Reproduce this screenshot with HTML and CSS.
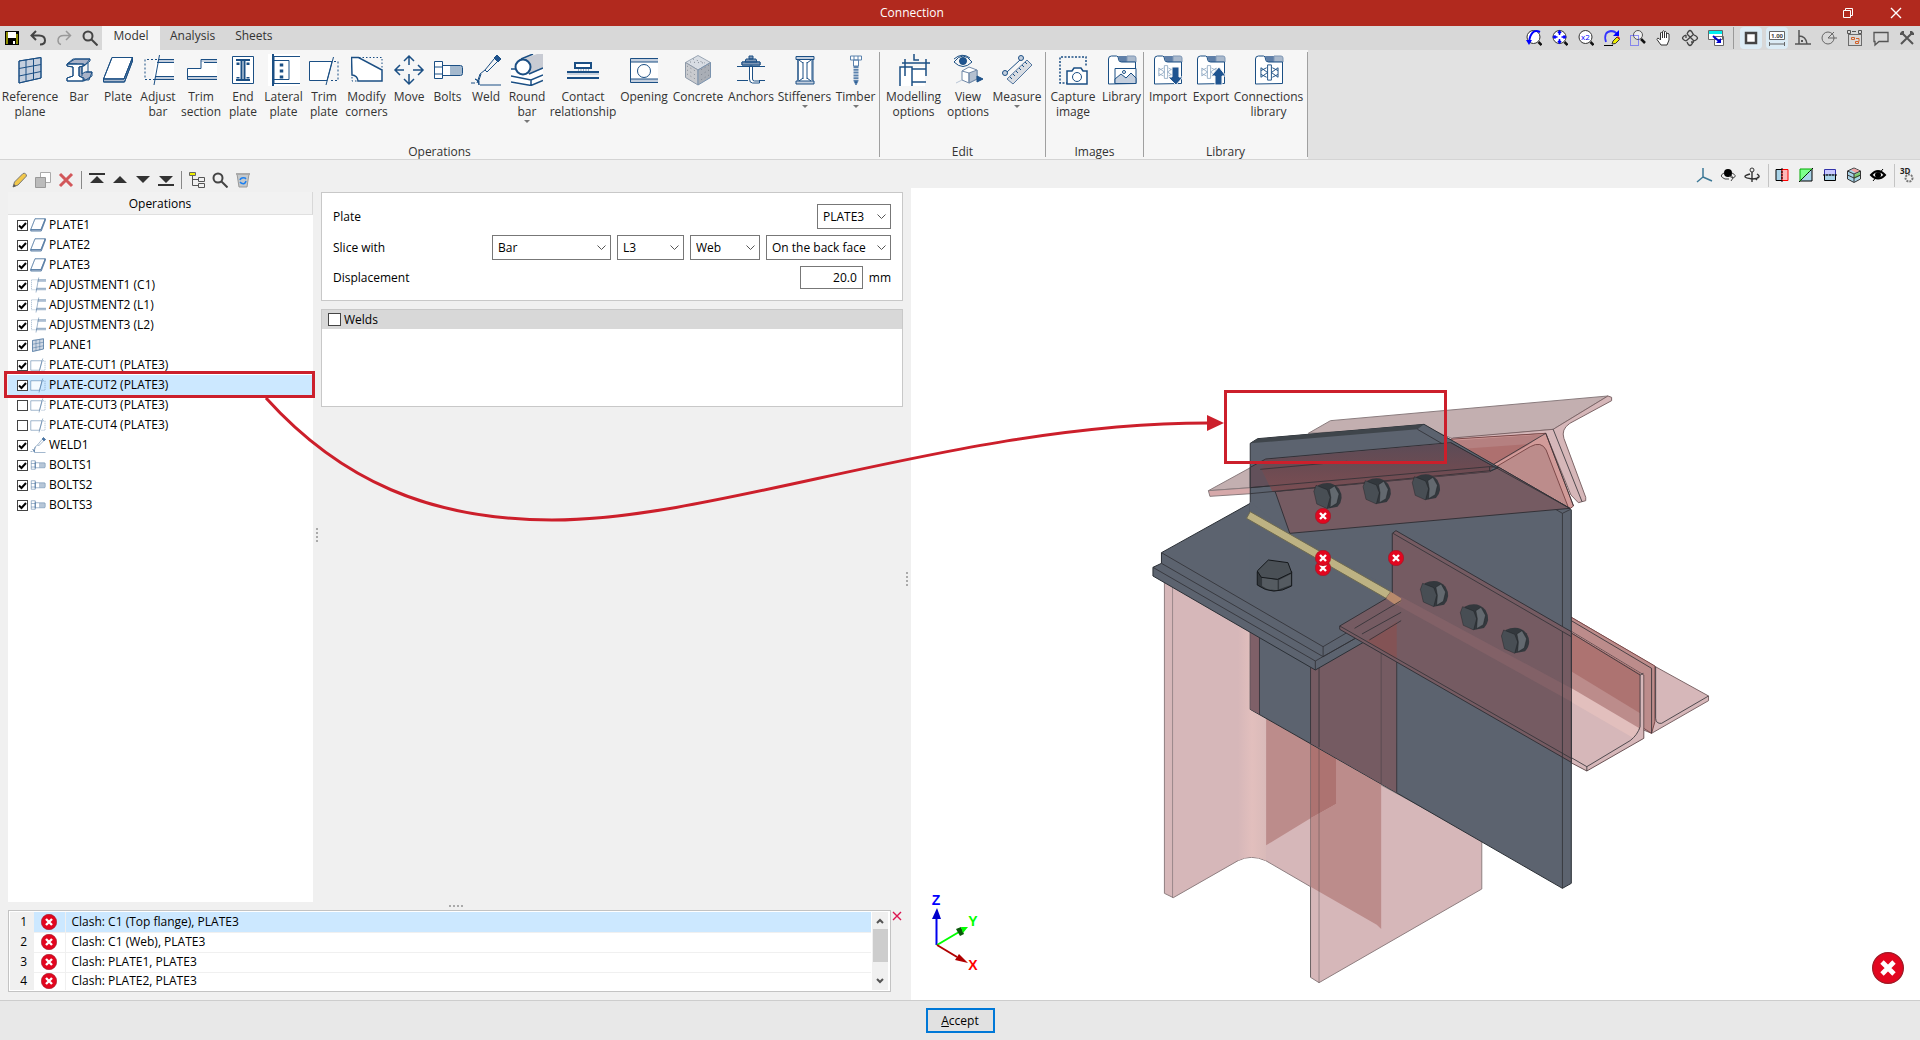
FILE: index.html
```html
<!DOCTYPE html>
<html lang="en">
<head>
<meta charset="utf-8">
<meta name="viewport" content="width=device-width, initial-scale=1">
<title>Connection</title>
<link rel="stylesheet" href="styles.css">
</head>
<body>
<svg class="defs" aria-hidden="true">
  <symbol id="i-ref" viewBox="0 0 32 32"><path class="tint" d="M5 7 27 3.500V24L5 29z"/><path d="M5 7 27 3.500V24L5 29zM5 14.500 27 10.500M5 22 27 17.500M12 6v21.500M19.500 5v21"/></symbol>
  <symbol id="i-bar" viewBox="0 0 32 32"><path fill="#aab3c8" d="m4 10 8-5h15l-4 5-4 2v8l3-2h7l-3 8H4l6-3 4-1v-12z"/><path fill="#fff" d="M4 10h16v2l-4 1v9l4 2v3H4v-3l6-2v-9l-6-1z"/><path d="M4 10h17v2l-5 1v9l5 2v3H4v-3l6-2v-9l-6-1zM4 10l6-5h17v2l-6 5M19 13v9M25 9v9M23 18h6v4l-8 5"/></symbol>
  <symbol id="i-plate" viewBox="0 0 32 32"><path class="paper" d="M10 3.500h20.500L22 25H1.500z"/><path fill="#aebccf" d="M1.500 25H22l8.500-21.500V7L22.500 28h-21z"/><path d="M10 3.500h20.500V7L22.500 28h-21v-3zM1.500 25H22l8.500-21"/></symbol>
  <symbol id="i-adjust" viewBox="0 0 32 32"><path class="paper" stroke="none" d="M14 5h18v20H11z"/><path class="tint" stroke="none" d="M16 5h16v3H15zM13 22h19v3H12z"/><path d="M16 5.500h16M15 8.500h17M13 22.500h19M12 25.500h20M17.500 1 12 31"/><path stroke-dasharray="2 2" d="M15 5.500H3v20h10"/></symbol>
  <symbol id="i-section" viewBox="0 0 32 32"><path class="paper" stroke="none" d="M2 14h14V5h16v20H2z"/><path class="tint" stroke="none" d="M16 5h16v3H16zM2 22h30v3H2z"/><path d="M32 5.500H16v9H2.500v11H32M19 8.500h13M3 22.500h29"/></symbol>
  <symbol id="i-end" viewBox="0 0 32 32"><path class="paper" d="M5.500 2.500h21v27h-21z"/><path stroke-width="2" d="M9 6h14M9 26h14M14.500 6v20M17.500 6v20"/><path stroke-width="3" stroke-dasharray="2.500 12" d="M11 8.500v16M21 8.500v16"/></symbol>
  <symbol id="i-lateral" viewBox="0 0 32 32"><path class="paper" stroke="none" d="M0 0h32v32H0z"/><path d="M5.500 0v32h-1V0M32 2.500H6v4M32 29.500H6v-4"/><path class="paper" d="M6 6.500h15v19H6z"/><path stroke-width="3.500" stroke-dasharray="3 3" d="M13.500 9.500v15"/></symbol>
  <symbol id="i-trim" viewBox="0 0 32 32"><path class="paper" d="M1.500 7.500H24L19 26.500H1.500z"/><path d="M25.500 3 18 31"/><path stroke-dasharray="2 2" d="M26 7.500h4v19h-9"/></symbol>
  <symbol id="i-modify" viewBox="0 0 32 32"><path class="paper" stroke-width="1.500" d="M.500 3.500h7L31 16v11H7a6 6 0 0 0-6-6z"/><path stroke-dasharray="1.500 2" d="M8 3.500h23V16M1 23v4h6"/></symbol>
  <symbol id="i-move" viewBox="0 0 32 32"><path stroke-width="1.500" d="M16 11V2m-5 5 5-5 5 5M16 20v10m-5-5 5 5 5-5M11 16H2m5-5-5 5 5 5M20 16h10m-5-5 5 5-5 5"/></symbol>
  <symbol id="i-bolt" viewBox="0 0 32 32"><path class="paper" d="M2.500 7.500h8v17h-8zM10.500 11.500h18q2 0 2 2v6q0 2-2 2h-18z"/><path d="M2.500 13h8M2.500 20h8M10.500 9v14"/><path stroke-width=".8" d="M19 12v9M21 12v9M23 12v9M25 12v9M27 12v9M29 12v9"/></symbol>
  <symbol id="i-weld" viewBox="0 0 32 32"><path d="M10 31H31M1 29h4M27 1l4 4-3 3-4-4zM24 5l-9 11 2 2L27 8M15 16l-5 4-3 9M11 20l-3 9"/><path class="solid" d="M27 1l4 4-3 3-4-4zM9 31q0-5-4-6l4 2z"/></symbol>
  <symbol id="i-round" viewBox="0 0 32 32"><path class="paper" stroke="none" d="M0 15 20 5h12v19l-12 8L0 30z"/><path fill="#c8cbd3" stroke="none" d="M14 4 26 0h6v15L17 20z"/><path stroke-width="1.500" d="M0 15h8M18 20l14-6M0 22l20 4 12-5M0 28l20 3.500 12-5M20 26v5M10 5 22 0"/><circle class="paper" stroke-width="2" cx="12" cy="13" r="7.500"/></symbol>
  <symbol id="i-contact" viewBox="0 0 32 32"><path class="paper" stroke-width="2" d="M8 9h16v5H8z"/><path stroke-width="2" d="M0 18h32M0 24h32"/><path stroke-width=".8" stroke-dasharray="1 1.500" d="M11 16h12"/><path stroke="#9fb3ca" d="M0 20h32"/></symbol>
  <symbol id="i-opening" viewBox="0 0 32 32"><path class="paper" d="M2.500 4.500H30v24H2.500z" stroke="none"/><path class="tint" stroke="none" d="M2.500 5H30v3H2.500zM2.500 25H30v3H2.500z"/><path d="M30 4.500H2.500v24H30M2.500 8H30M2.500 25H30"/><circle cx="16" cy="17" r="6.500"/></symbol>
  <symbol id="i-concrete" viewBox="0 0 32 32"><path fill="#d8dde4" stroke="#9aa6b4" d="m16 1.500 12.500 7L16 16 3.500 8.500z"/><path fill="#c9cbcf" stroke="#8d99a8" d="M3.500 8.500 16 16v15L3.500 23.500z"/><path fill="#a9aeb6" stroke="#7b93ae" d="M28.500 8.500 16 16v15l12.500-7.500z"/><path stroke="#6d7681" stroke-width=".8" stroke-dasharray="1 3" d="M5 12l10 6M5 16l10 6M5 20l10 6M27 11l-10 6M27 16l-10 6M27 21l-10 6M8 8l14 1M11 5l12 4"/></symbol>
  <symbol id="i-anchors" viewBox="0 0 32 32"><path class="paper" d="M14.500 12h3v13q0 2 2 2h5v2h-7q-3 0-3-4z"/><path d="M2 12.500h28M2 26.500h11M24 26.500h6M7 8h18v3H7z"/><path fill="#7f97b5" d="M7 8h18v3H7zM11 5h10l1 3H10zM14 2h4v3h-4z"/></symbol>
  <symbol id="i-stiff" viewBox="0 0 32 32"><path class="paper" d="M9 5h15v23H9z"/><path class="tint" d="M7 2.500h18v3H7zM7 27h18v3H7z"/><path d="M9 6v20M23 6v20M14 8v17M18 8v17M10 6l4 3M22 6l-4 3M10 27l4-3M22 27l-4-3"/></symbol>
  <symbol id="i-timber" viewBox="0 0 32 32"><g stroke="#5b82ad"><path class="paper" d="M10.500 2h11v4h-11zM13.500 6h5v6h-5zM14 2v4M18 2v4"/><path stroke-width="5" stroke-dasharray="2 .8" d="M16 12v15"/><path class="solid" d="M14 27h4l-2 4z"/></g></symbol>
  <symbol id="i-modelling" viewBox="0 0 32 32"><path class="paper" stroke="none" d="M2 13h25v19H2z"/><path stroke-width="1.500" d="M4 9h28M2 32V13h12v19M7 5v17M28 5v17M16 0v6h5M14 15h14M14 28h14"/></symbol>
  <symbol id="i-view" viewBox="0 0 32 32"><path d="M2 8q9-12 18 0-9 9-18 0z"/><circle class="solid" cx="11" cy="7" r="3.500"/><path d="M2 5q8-7 16-1"/><path class="paper" stroke="#7189a8" d="m10 17 7-4 8 3v9l-8 4-7-3z"/><path fill="#b4c0d0" stroke="#7189a8" d="m17 19 8-3v9l-8 4z"/><path stroke="#7189a8" d="m10 17 7 2v10"/><path class="solid" d="m25 22 6 3-6 3z"/><path stroke="#b9c6d6" d="m4 29 6-3"/></symbol>
  <symbol id="i-measure" viewBox="0 0 32 32"><path d="M6 18 19 6"/><circle class="tint" cx="4" cy="19" r="2.500"/><circle class="tint" cx="20" cy="4" r="2.500"/><path fill="#d9dde3" stroke="#54779f" d="M6 25 26 6l5 5-19 19z"/><path d="m9 23 2 2m1-5 2 2m1-5 2 2m1-5 2 2m1-5 2 2m1-5 2 2"/></symbol>
  <symbol id="i-capture" viewBox="0 0 32 32"><path stroke-width="1.500" stroke-dasharray="2 1.500" d="M11 29H3V3h26v9"/><path class="paper" stroke-width="1.500" d="M10 17h5l2-3h7l2 3h4v13H10z"/><circle cx="20" cy="23" r="4.500"/></symbol>
  <symbol id="i-folder" viewBox="0 0 32 32"><path fill="#5f7fa8" stroke="none" d="M12 2h9v6h-7z"/><path fill="#aab9cc" stroke="#7f97b5" d="M21 2h7q2 0 2 2v4h-9z"/><path class="paper" d="M2.500 30V5q0-3 3-3h5q2 0 2 3 0 3 3 3h14v21.500z"/></symbol>
  <symbol id="i-truss" viewBox="0 0 20 20"><path d="M8 2v16M12 2v16M8 2h4M8 18h4M1 5v10M19 5v10M1 5l7 5-7 5M19 5l-7 5 7 5M1 8l6-3M1 12l6 3M19 8l-6-3M19 12l-6 3"/></symbol>
  <symbol id="s-search" viewBox="0 0 16 16"><g stroke="#444" stroke-width="2"><circle cx="6" cy="6" r="4.500"/><path d="m9.500 9.500 6 6"/></g></symbol>
  <symbol id="s-lens" viewBox="0 0 16 16"><circle cx="7.500" cy="7" r="6.500" fill="#fff" stroke="#333"/><path stroke="#111" stroke-width="2.500" d="m12.500 12 3 3"/></symbol>
  <symbol id="s-err" viewBox="0 0 16 16"><circle cx="8" cy="8" r="7.700" fill="#e2061f" stroke="#9c1a26" stroke-width=".6"/><path stroke="#fff" stroke-width="2.400" d="m5 5 6 6m0-6-6 6"/></symbol>
</svg>

<header class="titlebar">
  <span></span>
  <h1>Connection</h1>
  <div class="window-buttons">
    <button aria-label="Restore"><svg viewBox="0 0 10 10" width="10" height="10"><path stroke="#fff" d="M.5 2.500h7v7h-7zM2.500 2.500v-2h7v7h-2"/></svg></button>
    <button aria-label="Close"><svg viewBox="0 0 10 10" width="10" height="10"><path stroke="#fff" stroke-width="1.400" d="m0 0 10 10M10 0 0 10"/></svg></button>
  </div>
</header>

<nav class="tabbar">
  <div class="quick">
    <button aria-label="Save"><svg viewBox="0 0 16 16"><path fill="#000" d="M1 1h14v14H1z"/><path fill="#8a8a00" d="M2 2h2v12H2zM12 4h2v10h-2z"/><path fill="#fff" d="M4 2h8v6H4zM9 11h2v3H9z"/></svg></button>
    <button aria-label="Undo"><svg viewBox="0 0 16 16"><path stroke="#444" stroke-width="2" d="M6 1 1.500 5.500 6 10M2 5.500h7q6 0 6 5 0 4-5 4"/></svg></button>
    <button aria-label="Redo"><svg viewBox="0 0 16 16"><path stroke="#999" stroke-width="1.500" d="m10 1 4.500 4.500L10 10M14 5.500H8q-6 0-6 5 0 3 3 4"/></svg></button>
    <button aria-label="Search"><svg><use href="#s-search"/></svg></button>
  </div>
  <div class="tabs" role="tablist">
    <button role="tab" aria-selected="true">Model</button>
    <button role="tab" aria-selected="false">Analysis</button>
    <button role="tab" aria-selected="false">Sheets</button>
  </div>
  <div class="view-tools">
    <button aria-label="Previous view"><svg><use href="#s-lens"/><path stroke="#00f" stroke-width="2" d="M14 2Q5-2 3 12"/><path fill="#00f" d="M0 10h6l-3 5z"/></svg></button>
    <button aria-label="Zoom all"><svg><use href="#s-lens"/><path stroke="#00f" stroke-width="1.500" d="M7.500 1v4M7.500 9v4M1.500 7h4M9.500 7h4M6 3l1.500-2L9 3M6 11l1.500 2L9 11M3.500 5.500 1.500 7l2 1.500M11.500 5.500l2 1.500-2 1.500"/></svg></button>
    <button aria-label="Zoom x2"><svg><use href="#s-lens"/><text x="3" y="10" font-size="8" fill="#00f">x2</text></svg></button>
    <button aria-label="Redraw"><svg viewBox="0 0 16 16"><path stroke="#33f" stroke-width="1.800" d="M2 12Q-1 2 7 1q4 0 6 3"/><path fill="#00f" d="M15 0v6H9z"/><path stroke="#000" d="M0 15.500h9"/><path fill="#ee0" stroke="#333" d="m8 14 1-3 4-4 2.500 2.500-4 4z"/><path fill="#d22" d="m13 7 2.500 2.500L16 8l-2-2z"/></svg></button>
    <button aria-label="Zoom window"><svg viewBox="0 0 16 16"><circle cx="8" cy="5" r="4.500" fill="#eee" stroke="#555"/><path stroke="#111" stroke-width="2.500" d="m11 9 4 4"/><path stroke="#33f" stroke-dasharray="1 1" d="M.500 5.500h8v10h-8z"/></svg></button>
    <button aria-label="Pan"><svg viewBox="0 0 16 16"><path fill="#fff" stroke="#333" d="M5 15 1 9.500q0-2 2-1l1.500 1.500V3q1-2 2 0V1.500q1-1.500 2 0V2q1-1.500 2 .5V4q1.500-1.500 2.500 0v6L11 15zM6.500 3v5M8.500 2v6M10.500 3v5"/></svg></button>
    <button aria-label="Orbit"><svg viewBox="0 0 16 16"><g stroke="#444" stroke-width="1.300"><path d="M5 4q3-7 6 0M5 12q3 7 6 0M4 5q-7 3 0 6M12 5q7 3 0 6M4 11l8-7M5 4l7 7M4 8V5M9 12h3"/></g></svg></button>
    <button aria-label="Windows"><svg viewBox="0 0 16 16"><path fill="#fff" stroke="#666" d="M.500.500h14v9H.500zM6.500 6.500h9v9h-9z"/><path fill="#0ee" d="M1 1h13v3H1z"/><path stroke="#00c" stroke-width="2" d="m5 6 7 6"/><path fill="#00c" d="M13 8v5H8z"/></svg></button>
    <i class="sep"></i>
    <button class="on" aria-label="Snap"><svg viewBox="0 0 16 16"><path fill="#fff" stroke="#444" stroke-width="2.500" d="M3 3h10v10H3z"/></svg></button>
    <button class="on" aria-label="Dimensions"><svg viewBox="0 0 16 16"><path fill="#fff" stroke="#666" d="M.500 1.500h15v8H.500zM.500 12v4M15.500 12v4M1 14h14"/><text x="2" y="8" font-size="6" font-weight="700" fill="#444">1.00</text></svg></button>
    <button aria-label="Angle"><svg viewBox="0 0 16 16"><path stroke="#555" stroke-width="1.500" d="M4 0v14M0 14h16M4 6q7 0 8 8"/><path fill="#555" d="M6 10h2v2H6z"/></svg></button>
    <button aria-label="Polar"><svg viewBox="0 0 16 16"><circle cx="7" cy="8" r="6" stroke="#666"/><path stroke="#666" d="M7 8h9M7 8l6-6"/></svg></button>
    <button aria-label="Layers"><svg viewBox="0 0 16 16"><path stroke="#000" stroke-dasharray="1 1" d="M1.500 4.500h13v11h-13z"/><path stroke="#555" d="M.500.500h3v3h-3zM11.500.500h3v3h-3zM5 1.500h4"/><path stroke="#d2622a" d="M4.500 7.500h3v2h-3zM9 8.500h3v3M8.500 11.500h3v2h-3z"/></svg></button>
    <button aria-label="Comment"><svg viewBox="0 0 16 16"><path stroke="#555" stroke-width="1.300" d="M1 2.500h14v9H6L2 15v-3.500H1z"/></svg></button>
    <button aria-label="Tools"><svg viewBox="0 0 16 16"><path stroke="#555" stroke-width="2" d="m2 2 12 12M14 2 2 14M1 4l3 0V1M12 1v3h3"/></svg></button>
  </div>
</nav>

<section class="ribbon" aria-label="Ribbon">
  <div class="group operations">
    <div class="items">
      <button><svg><use href="#i-ref"/></svg>Reference<br>plane</button>
      <button><svg><use href="#i-bar"/></svg>Bar</button>
      <button><svg><use href="#i-plate"/></svg>Plate</button>
      <button><svg><use href="#i-adjust"/></svg>Adjust<br>bar</button>
      <button><svg><use href="#i-section"/></svg>Trim<br>section</button>
      <button><svg><use href="#i-end"/></svg>End<br>plate</button>
      <button><svg><use href="#i-lateral"/></svg>Lateral<br>plate</button>
      <button><svg><use href="#i-trim"/></svg>Trim<br>plate</button>
      <button><svg><use href="#i-modify"/></svg>Modify<br>corners</button>
      <button><svg><use href="#i-move"/></svg>Move</button>
      <button><svg><use href="#i-bolt"/></svg>Bolts</button>
      <button><svg><use href="#i-weld"/></svg>Weld</button>
      <button class="more"><svg><use href="#i-round"/></svg>Round<br>bar</button>
      <button><svg><use href="#i-contact"/></svg>Contact<br>relationship</button>
      <button><svg><use href="#i-opening"/></svg>Opening</button>
      <button><svg><use href="#i-concrete"/></svg>Concrete</button>
      <button><svg><use href="#i-anchors"/></svg>Anchors</button>
      <button class="more"><svg><use href="#i-stiff"/></svg>Stiffeners</button>
      <button class="more"><svg><use href="#i-timber"/></svg>Timber</button>
    </div>
    <h2>Operations</h2>
  </div>
  <div class="group edit">
    <div class="items">
      <button><svg><use href="#i-modelling"/></svg>Modelling<br>options</button>
      <button><svg><use href="#i-view"/></svg>View<br>options</button>
      <button class="more"><svg><use href="#i-measure"/></svg>Measure</button>
    </div>
    <h2>Edit</h2>
  </div>
  <div class="group images">
    <div class="items">
      <button><svg><use href="#i-capture"/></svg>Capture<br>image</button>
      <button><svg viewBox="0 0 32 32"><use href="#i-folder"/><path class="paper" d="M9 14.500h21v15H9z"/><path class="tint" d="m9 25 6-5 5 4 5-5 5 5v5.500H9z"/><circle cx="18" cy="18" r="1.500"/></svg>Library</button>
    </div>
    <h2>Images</h2>
  </div>
  <div class="group library">
    <div class="items">
      <button><svg viewBox="0 0 32 32"><use href="#i-folder"/><use href="#i-truss" x="6" y="9" width="16" height="18" opacity=".5"/><path class="solid" stroke="#f6f6f6" d="M20 13h7v10h4l-7 8-8-8h4z"/></svg>Import</button>
      <button><svg viewBox="0 0 32 32"><use href="#i-folder"/><use href="#i-truss" x="6" y="9" width="16" height="18" opacity=".5"/><path class="solid" stroke="#f6f6f6" d="M20 31h7V22h4l-7-9-8 9h4z"/></svg>Export</button>
      <button><svg viewBox="0 0 32 32"><use href="#i-folder"/><use href="#i-truss" x="6" y="9" width="21" height="19"/></svg>Connections<br>library</button>
    </div>
    <h2>Library</h2>
  </div>
</section>

<main class="workspace">
  <div class="left">
    <div class="list-tools">
      <button aria-label="Edit"><svg viewBox="0 0 16 16"><path fill="#f2c84b" stroke="#777" d="m1 15 1.500-5L11 1.500q3-1 3.500 2.500L6 13z"/><path fill="#555" d="m1 15 1-3 2 2z"/></svg></button>
      <button aria-label="Copy"><svg viewBox="0 0 16 16"><path fill="#fff" stroke="#aaa" d="M5.500.500h10v10h-10z"/><path fill="#bbb" stroke="#999" d="M.500 5.500h10v10H.500z"/></svg></button>
      <button aria-label="Delete"><svg viewBox="0 0 16 16"><path stroke="#d2575a" stroke-width="3" d="m2 2 12 12M14 2 2 14"/></svg></button>
      <i class="sep"></i>
      <button aria-label="Move to top"><svg viewBox="0 0 16 16"><path fill="#333" d="M0 1h16v2H0zM8 4l7 7H1z"/></svg></button>
      <button aria-label="Move up"><svg viewBox="0 0 16 16"><path fill="#333" d="m8 4 7 7H1z"/></svg></button>
      <button aria-label="Move down"><svg viewBox="0 0 16 16"><path fill="#333" d="m8 11 7-7H1z"/></svg></button>
      <button aria-label="Move to bottom"><svg viewBox="0 0 16 16"><path fill="#333" d="M0 12h16v2H0zM8 11l7-7H1z"/></svg></button>
      <i class="sep"></i>
      <button aria-label="Tree"><svg viewBox="0 0 16 16"><path fill="#ee0" stroke="#666" d="M.500.500h6v3h-6z"/><path stroke="#555" d="M3.500 4v9.500h6M4 7.500h6M9.500 5.500h6v4h-6zM9.500 11.500h6v4h-6z"/></svg></button>
      <button aria-label="Find"><svg><use href="#s-search"/></svg></button>
      <button aria-label="Purge"><svg viewBox="0 0 16 16"><path fill="#c4c8cb" stroke="#999" d="M2 2h12l-2 13H4z"/><path fill="#aaa" d="M1 1h14v2H1z"/><path stroke="#1b7ff0" stroke-width="1.500" d="M5 8q1-3 5-2l1 1M11 9q-1 4-5 2L5 10"/></svg></button>
    </div>

    <div class="editor">
      <section class="tree" aria-labelledby="ops">
        <h2 id="ops">Operations</h2>
        <ul>
          <li><label><input type="checkbox" checked><svg><use href="#i-plate"/></svg>PLATE1</label></li>
          <li><label><input type="checkbox" checked><svg><use href="#i-plate"/></svg>PLATE2</label></li>
          <li><label><input type="checkbox" checked><svg><use href="#i-plate"/></svg>PLATE3</label></li>
          <li><label><input type="checkbox" checked><svg><use href="#i-adjust"/></svg>ADJUSTMENT1 (C1)</label></li>
          <li><label><input type="checkbox" checked><svg><use href="#i-adjust"/></svg>ADJUSTMENT2 (L1)</label></li>
          <li><label><input type="checkbox" checked><svg><use href="#i-adjust"/></svg>ADJUSTMENT3 (L2)</label></li>
          <li><label><input type="checkbox" checked><svg><use href="#i-ref"/></svg>PLANE1</label></li>
          <li><label><input type="checkbox" checked><svg><use href="#i-trim"/></svg>PLATE-CUT1 (PLATE3)</label></li>
          <li class="selected"><label><input type="checkbox" checked><svg><use href="#i-trim"/></svg>PLATE-CUT2 (PLATE3)</label></li>
          <li><label><input type="checkbox"><svg><use href="#i-trim"/></svg>PLATE-CUT3 (PLATE3)</label></li>
          <li><label><input type="checkbox"><svg><use href="#i-trim"/></svg>PLATE-CUT4 (PLATE3)</label></li>
          <li><label><input type="checkbox" checked><svg><use href="#i-weld"/></svg>WELD1</label></li>
          <li><label><input type="checkbox" checked><svg><use href="#i-bolt"/></svg>BOLTS1</label></li>
          <li><label><input type="checkbox" checked><svg><use href="#i-bolt"/></svg>BOLTS2</label></li>
          <li><label><input type="checkbox" checked><svg><use href="#i-bolt"/></svg>BOLTS3</label></li>
        </ul>
      </section>
      <div class="grip column"></div>
      <div class="forms">
        <form class="card">
          <div class="row"><label for="plate">Plate</label><select id="plate" class="w74"><option>PLATE3</option></select></div>
          <div class="row"><label for="slice">Slice with</label>
            <select id="slice" class="w119"><option>Bar</option></select>
            <select class="w67" aria-label="Bar name"><option>L3</option></select>
            <select class="w70" aria-label="Part"><option>Web</option></select>
            <select class="w125" aria-label="Face"><option>On the back face</option></select></div>
          <div class="row"><label for="disp">Displacement</label><input id="disp" type="text" value="20.0"><span>mm</span></div>
        </form>
        <section class="welds">
          <label><input type="checkbox">Welds</label>
        </section>
      </div>
      <div class="grip column last"></div>
    </div>
    <div class="grip across"></div>
    <div class="clashes">
      <div class="clash-box">
        <table>
          <tr class="selected"><th scope="row">1</th><td><svg><use href="#s-err"/></svg></td><td>Clash: C1 (Top flange), PLATE3</td></tr>
          <tr><th scope="row">2</th><td><svg><use href="#s-err"/></svg></td><td>Clash: C1 (Web), PLATE3</td></tr>
          <tr><th scope="row">3</th><td><svg><use href="#s-err"/></svg></td><td>Clash: PLATE1, PLATE3</td></tr>
          <tr><th scope="row">4</th><td><svg><use href="#s-err"/></svg></td><td>Clash: PLATE2, PLATE3</td></tr>
        </table>
        <div class="scroll">
          <svg viewBox="0 0 8 6"><path stroke="#555" stroke-width="2" d="m1 5 3-3 3 3"/></svg>
          <i></i>
          <svg viewBox="0 0 8 6"><path stroke="#555" stroke-width="2" d="m1 1 3 3 3-3"/></svg>
        </div>
      </div>
      <button class="dismiss" aria-label="Close messages"><svg viewBox="0 0 8 8"><path stroke="#dc1450" stroke-width="1.400" d="m0 0 8 8M8 0 0 8"/></svg></button>
    </div>
  </div>

  <div class="right">
    <div class="scene-tools">
      <button aria-label="Axes"><svg viewBox="0 0 16 16"><path stroke="#3c7896" stroke-width="1.500" d="M7 1v9l-6 5M7 10l9 4"/></svg></button>
      <button aria-label="Orbit view"><svg viewBox="0 0 16 16"><circle cx="8" cy="6" r="4" fill="#000"/><path stroke="#444" d="M4 6q-6 3 1 6l4 0M12 6q6 3 1 5l-4-2M11 8l2 3-2 3"/></svg></button>
      <button aria-label="Turn view"><svg viewBox="0 0 16 16"><path stroke="#333" stroke-width="1.400" d="M8 5v10M6 7q-11 3 2 5 11-1 5-5M12 13l2-3"/><circle cx="8" cy="3" r="2" stroke="#333"/></svg></button>
      <i class="sep"></i>
      <button aria-label="Section X"><svg viewBox="0 0 16 16"><path fill="#a9d3e8" stroke="#000" d="M2 2.500h6v11H2z"/><path fill="#ffb9b9" stroke="#f00" d="M8 2.500h6v11H8z"/><path stroke="#000" stroke-dasharray="2 1" d="M8 1v14"/></svg></button>
      <button aria-label="Section Y"><svg viewBox="0 0 16 16"><path fill="#a9d3e8" stroke="#000" d="M14 2v12H2z"/><path fill="#7dff8d" stroke="#0a0" d="M2 14V2h12z"/><path stroke="#000" stroke-dasharray="2 1" d="M1 15 15 1"/></svg></button>
      <button aria-label="Section Z"><svg viewBox="0 0 16 16"><path fill="#c9c9ff" stroke="#33a" d="M2.500 2.500h11V8h-11z"/><path fill="#a9d3e8" stroke="#000" d="M2.500 8h11v5.500h-11z"/><path stroke="#a9d3e8" d="M3 8h10"/><path stroke="#000" stroke-dasharray="2 1" d="M1 8h14"/></svg></button>
      <button aria-label="Blocks"><svg viewBox="0 0 16 16"><path fill="#a9d3e8" stroke="#333" d="m8 1 6.500 3v8L8 15.500 1.500 12V4z"/><path fill="#f3a3a3" d="m8 1.500 6 2.500-4 2-5-3z"/><path fill="#7ecb6a" d="m8 8 6-3v4l-6 3z"/><path stroke="#333" d="m1.500 4 6.500 3 6.500-3M8 7v8M1.500 8 8 11l6.500-3"/></svg></button>
      <button aria-label="Hide"><svg viewBox="0 0 16 16"><path stroke="#000" stroke-width="2" d="M1 8q7-8 14 0-7 7-14 0z"/><circle cx="8" cy="8" r="3" fill="#000"/><path stroke="#000" d="M3 14 13 2"/></svg></button>
      <i class="sep"></i>
      <button aria-label="3D settings"><svg viewBox="0 0 16 16"><text x="0" y="7" font-size="8" font-weight="700" fill="#222">3D</text><circle cx="9" cy="11" r="3.500" stroke="#777" stroke-width="2" stroke-dasharray="2 1"/></svg></button>
    </div>
    <svg class="scene" viewBox="911 188 1009 812" role="img" aria-label="3D model of the connection">
      <defs>
        <linearGradient id="fillet"><stop offset="0" stop-color="#d6b7b9"/><stop offset=".5" stop-color="#e2bfbd"/><stop offset="1" stop-color="#d9bab9"/></linearGradient>
        <linearGradient id="shade" x1="0" x2="0" y1="0" y2="1"><stop offset="0" stop-color="#5c4c57"/><stop offset=".5" stop-color="#6c4b52"/><stop offset="1" stop-color="#7a4e53"/></linearGradient>
        <g id="nut"><path fill="#33383d" d="M-25-30Q10-48 32-20 48 10 28 34L0 40z"/><path fill="#484e54" stroke="#15181b" d="M-36-12-30-30 0-17 8 6 0 40-28 26z"/><path fill="#63696f" stroke="#15181b" d="M6-18 20-28 32-4 26 24 8 36 10 6z"/></g>
      </defs>
      <g class="model" transform="translate(1140 380) scale(.3699 .33333)">
        <!-- column behind the plate -->
        <path fill="#d6b7b9" stroke="#8f7f81" d="M66 600V1540L90 1553 265 1442Q300 1422 340 1442L461 1520V1792L484 1808 924 1527V1380L652 1215 298 980V750z"/>
        <path fill="url(#fillet)" d="M265 740h76v702Q300 1420 265 1442z"/>
        <path fill="#bc8c8b" d="M341 1000V1396L461 1315 530 1272V1130L652 1210V1647L640 1634 461 1520V1315 1090z"/>
        <path fill="#ad7371" d="M461 1080 530 1130V1272L461 1315z"/>
        <path class="edge soft" d="M88 620V1553M461 1080V1792M484 1090V1808"/>
        <!-- far angle, right of the plate -->
        <path fill="#d6b7b9" stroke="#7d6668" d="M1160 708 1390 858 1537 948V962L1383 1060 1340 1040 1160 930z"/>
        <path fill="#bc8c8b" stroke="#7d4a4a" d="M1160 708 1392 858V1025L1383 1060 1362 1045 1160 930z"/>
        <path class="edge" d="M1166 722 1383 865V1060M1394 860V1015Q1395 1032 1410 1030L1537 948"/>
        <!-- near angle, right of the plate -->
        <path fill="#d6b7b9" stroke="#6b5355" d="M1160 750 1362 885V1075L1208 1173 1160 1145z"/>
        <path fill="#ad7371" d="M1160 752 1352 880V1010L1160 890z"/>
        <path fill="#bc8c8b" d="M1160 870 1352 1000V1050L1160 925z"/>
        <path fill="#e2bfbd" d="M1160 920 1350 1045 1335 1075 1160 962z"/>
        <path class="edge" d="M1160 755 1352 885V1040Q1345 1065 1325 1082L1208 1160 1166 1133M1208 1160V1173M1352 885 1361 880"/>
        <!-- upper angle, outside the plate -->
        <path fill="#c3afb0" stroke="#8a7c7e" d="M455 160 515 122 1265 48 1117 148 845 176 768 140z"/>
        <path fill="#d6b7b9" stroke="#7d6668" d="M1265 48 1275 52V62L1162 130Q1138 148 1146 175L1205 352V362L1185 368 1165 345 1097 160 840 180 845 174 1117 148z"/>
        <path class="edge" d="M1117 148 1195 365"/>
        <path fill="#d29b99" stroke="#7d4a4a" d="M835 178 1097 160 1172 378 1160 388z"/>
        <path fill="#b58080" d="M840 182 1090 163 1050 195 945 262z"/>
        <path fill="#ae706f" d="M865 207 1050 192 945 262z"/>
        <path fill="#bc8c8b" stroke="#7d4a4a" d="M945 272 1055 200Q1085 182 1098 210L1160 388z"/>
        <path class="edge" d="M945 260 1097 160 1172 378"/>
        <path fill="#c3afb0" stroke="#8a7c7e" d="M300 262 185 332 300 323z"/>
        <path fill="#d6a9aa" stroke="#8a7c7e" d="M185 332 300 323V341L189 349z"/>
        <!-- main plate -->
        <path fill="#5c636f" stroke="#2b3036" d="M298 190 318 176 768 133 1162 385 1166 390V1510L1142 1525 693 1238 298 988z"/>
        <path fill="#3f454b" d="M298 190 318 176 768 133 750 148z"/>
        <path class="edge" d="M750 148 1142 400V1525M1142 400 1164 388"/>
        <!-- upper angle over the plate -->
        <path fill="#62505a" stroke="#343238" d="M298 262 340 237 840 188 955 260 298 323z"/>
        <path fill="#755b62" stroke="#343238" d="M345 270 362 335 945 275 970 262 1162 385 405 460z"/>
        <path fill="url(#shade)" d="M328 268 345 239 840 190 955 260 945 275 358 335z"/>
        <path class="edge" d="M325 268 560 244M298 323 945 260 970 262M298 341 948 272 970 262M945 260V273M840 188 1162 385"/>
        <!-- column over the plate -->
        <path fill="#7f6068" d="M298 700H323V1003L298 988z"/>
        <path fill="#755b62" d="M461 800 694 690V1238L461 1090z"/>
        <path class="edge" d="M323 760V1003M461 850V1090M484 850V1102M694 845V1238"/>
        <path class="edge soft" d="M652 760V1212"/>
        <!-- end plates -->
        <path fill="#5c636f" stroke="#2b3036" d="M298 370 58 518V550L35 562V588L474 870 706 722V655L298 400z"/>
        <path fill="#5c636f" d="M300 366 400 462 706 640V700H296V368z"/>
        <path class="edge" d="M58 518 495 800 706 662M58 550 495 830 706 697M35 562 474 843 706 697M495 800V830M474 843V870"/>
        <path fill="#bdb283" stroke="#6e6a50" d="M298 395 288 415 665 655 678 635z"/>
        <!-- near angle over the plate -->
        <path fill="#755b62" stroke="#343238" d="M682 460 692 452 1166 755V1147L540 748V738L682 645z"/>
        <path fill="#835355" d="M612 782 652 758 694 725V838z"/>
        <path fill="#8a666b" opacity=".6" d="M706 650 1166 925V965L690 672z"/>
        <path fill="#b98a6c" d="M678 635 706 655V665L690 674 665 655z"/>
        <path class="edge" d="M684 460 1166 770M540 738 1166 1135M580 745 706 662M600 762 706 697M620 780 706 722M1142 755V1133"/>
        <use href="#nut" x="506" y="346"/><use href="#nut" x="639" y="332"/><use href="#nut" x="772" y="320"/>
        <use href="#nut" x="794" y="640"/><use href="#nut" x="902" y="710"/><use href="#nut" x="1013" y="780"/>
        <path fill="#33383d" stroke="#15181b" d="M317 575V615Q360 650 410 618V575z"/>
        <path fill="#555b61" d="M330 592 372 600V630Q345 632 330 618zM376 600 408 582V615L376 628z"/>
        <path fill="#4a5056" stroke="#15181b" d="M317 573 347 540 400 548 410 578 372 598 328 592z"/>
      </g>
      <use href="#s-err" x="1315" y="560" width="16" height="16"/>
      <use href="#s-err" x="1315" y="550" width="16" height="16"/>
      <use href="#s-err" x="1315" y="508" width="16" height="16"/>
      <use href="#s-err" x="1388" y="550" width="16" height="16"/>
      <use href="#s-err" x="1872" y="952" width="32" height="32"/>
      <g stroke-width="2">
        <path stroke="#00e" d="M936.500 945V918"/><path fill="#00c" d="M932 919h9l-4-11z"/>
        <path stroke="#0f0" d="m937 945 22-13"/><path fill="#0a5a0a" d="m956 929 4 7 4-2-3-7z"/><path fill="#0f0" d="m961 927 7 0-5 6z"/>
        <path stroke="#b00000" d="m937 945 20 12"/><path fill="#b00000" d="m959 954-4 6 13 3z"/>
      </g>
      <g class="axis-names" text-anchor="middle"><text x="936" y="905" fill="#00f">Z</text><text x="973" y="926" fill="#0f0">Y</text><text x="973" y="970" fill="#f00">X</text></g>
    </svg>
  </div>

  <svg class="callout" width="1460" height="420" viewBox="0 160 1460 420" aria-hidden="true">
    <g stroke="#cc1f2b" stroke-width="3">
      <path d="M5.500 372.500h308v24h-308zM1225.500 391.500h220v71h-220z"/>
      <path d="M266 398C340 480 430 520 552 520 720 520 960 423 1208 423"/>
    </g>
    <path fill="#cc1f2b" d="m1207 415 17 8-17 8z"/>
  </svg>
</main>

<footer class="footer"><button class="accept"><u>A</u>ccept</button></footer>
</body>
</html>
```

FILE: styles.css
```css
* { box-sizing: border-box; }

body {
  margin: 0;
  min-height: 100vh;
  display: flex;
  flex-direction: column;
  background: #f0f0f0;
  color: #000;
  font: 12px/16px "Open Sans", "Noto Sans", sans-serif;
}

button, input, select { font: inherit; color: inherit; }
button { padding: 0; border: 0; background: none; }
h1, h2 { margin: 0; font-size: 12px; font-weight: 400; }
svg { display: block; fill: none; overflow: visible; }
.defs { position: absolute; width: 0; height: 0; }
symbol, .ribbon svg, .tree svg { stroke: #1b4f84; }
.tint { fill: #c4cfde; }
.paper { fill: #fff; }
.solid { fill: #1f5490; }

/* title bar */
.titlebar {
  height: 26px;
  display: grid;
  grid-template-columns: 1fr auto 1fr;
  align-items: center;
  background: #b1291e;
  color: #fff;
}
.titlebar h1 { padding-right: 96px; }
.window-buttons { display: flex; justify-content: flex-end; }
.window-buttons button { width: 48px; height: 26px; display: grid; place-items: center; }

/* tabs */
.tabbar { height: 24px; display: flex; background: #d8d8d8; color: #333; }
.quick { width: 102px; display: flex; align-items: center; justify-content: space-between; padding: 0 4px; }
.quick svg, .list-tools svg, .scene-tools svg, .view-tools svg { width: 16px; height: 16px; }
.tabs { display: flex; }
.tabs button { padding: 0 10px 4px; }
.tabs [aria-selected="true"] { width: 58px; background: #f6f6f6; }
.view-tools { margin-left: auto; display: flex; align-items: center; }
.view-tools button { width: 22px; height: 22px; margin: 0 2px; display: grid; place-items: center; }
.view-tools .on { background: #dcecf5; border-radius: 4px; }
.view-tools .sep { width: 1px; height: 22px; margin: 0 4px; background: #999; }

/* ribbon */
.ribbon {
  height: 110px;
  display: flex;
  background: #e2e2e2;
  border-bottom: 1px solid #d4d4d4;
  color: #333;
}
.group {
  position: relative;
  display: flex;
  flex-direction: column;
  justify-content: space-between;
  background: #f6f6f6;
  padding: 4px 1px 0 0;
}
.group::after { content: ""; position: absolute; right: 0; top: 2px; bottom: 2px; width: 1px; background: #a0a0a0; }
.group h2 { text-align: center; line-height: 15px; }
.items { display: grid; }
.operations .items { grid-template-columns: 60px 38px 40px 40px 46px 38px 43px 38px 47px 38px 39px 38px 44px 68px 54px 54px 52px 55px 47px; }
.edit .items { grid-template-columns: 67px 42px 56px; }
.images .items { grid-template-columns: 54px 43px; }
.library .items { grid-template-columns: 48px 38px 77px; }
.items button {
  display: flex;
  flex-direction: column;
  align-items: center;
  line-height: 15px;
  white-space: nowrap;
  min-width: 0;
}
.items svg { width: 32px; height: 32px; margin-bottom: 3px; flex: none; }
.more::after { content: ""; margin-top: 1px; border: 3px solid transparent; border-top-color: #777; border-bottom: 0; }

/* workspace */
.workspace { position: relative; flex: 1; display: grid; grid-template-columns: 911fr 1009fr; }
.left { display: flex; flex-direction: column; min-width: 0; padding-bottom: 8px; }
.list-tools { height: 32px; display: flex; align-items: center; padding: 8px 0 0 12px; gap: 7px; }
.list-tools .sep { width: 1px; height: 18px; background: #888; }
.editor { flex: 1; display: flex; }
.tree { flex: none; width: 305px; margin-left: 8px; background: #fff; }
.tree h2 {
  height: 23px;
  line-height: 23px;
  text-align: center;
  background: #f2f2f2;
  border-right: 1px solid #d8d8d8;
  border-bottom: 1px solid #e0e0e0;
}
.tree ul { list-style: none; margin: 0; padding: 0; }
.tree label { height: 20px; display: flex; align-items: center; padding-left: 9px; }
.tree svg { width: 16px; height: 16px; margin: 0 3px 0 2px; opacity: .8; }
.selected { background: #cce8ff; }
input[type="checkbox"] {
  appearance: none;
  width: 11px;
  height: 11px;
  margin: 0;
  flex: none;
  border: 1px solid #444;
  background: #fff;
}
input[type="checkbox"]:checked {
  background: #fff url("data:image/svg+xml,%3Csvg xmlns='http://www.w3.org/2000/svg' viewBox='0 0 9 9'%3E%3Cpath d='M1 4.500 3.500 7 8 2' fill='none' stroke='%23000' stroke-width='2'/%3E%3C/svg%3E");
}

.grip.column { width: 8px; display: grid; place-items: center; }
.grip.column::after { content: ""; width: 2px; height: 14px; margin-bottom: 24px; background: repeating-linear-gradient(#aaa 0 2px, transparent 2px 4px); }
.grip.last::after { margin: 64px 0 0; }
.grip.across { height: 8px; display: grid; place-items: center; }
.grip.across::after { content: ""; width: 14px; height: 2px; background: repeating-linear-gradient(90deg, #aaa 0 2px, transparent 2px 4px); }

.forms { flex: 1; min-width: 0; }
.card, .welds { background: #fff; border: 1px solid #c8c8c8; }
.card { padding: 11px; display: grid; gap: 6px; }
.row { display: flex; align-items: center; gap: 6px; height: 25px; }
.row:last-child { height: 23px; }
.row label { margin-right: auto; }
select {
  appearance: none;
  height: 25px;
  padding: 0 5px;
  border: 1px solid #777;
  border-radius: 0;
  background: #fff url("data:image/svg+xml,%3Csvg xmlns='http://www.w3.org/2000/svg' viewBox='0 0 9 6'%3E%3Cpath d='m.5.5 4 4 4-4' fill='none' stroke='%23555'/%3E%3C/svg%3E") no-repeat right 4px center / 9px 6px;
}
.w67 { width: 67px; }
.w70 { width: 70px; }
.w74 { width: 74px; }
.w119 { width: 119px; }
.w125 { width: 125px; }
.row input { width: 63px; height: 23px; padding: 0 5px; border: 1px solid #777; text-align: right; }
.welds { margin-top: 8px; height: 98px; }
.welds label { height: 19px; display: flex; align-items: center; gap: 3px; padding-left: 6px; background: #d8d8d8; }
.welds input { width: 13px; height: 13px; }

.clashes { display: flex; padding-left: 8px; }
.clash-box { flex: 1; display: flex; padding: 1px; border: 1px solid #c3c3c3; background: #fff; }
table { flex: 1; border-collapse: collapse; }
th, td { height: 20px; padding: 0; text-align: left; font-weight: 400; border-bottom: 1px solid #f0f0f0; }
tr:last-child > * { border-bottom: 0; height: 18px; }
th { width: 24px; padding-right: 7px; text-align: right; background: #f0f0f0; }
td:nth-child(2) { width: 31px; border-right: 1px solid #f0f0f0; }
td:nth-child(3) { padding-left: 6px; }
td svg { width: 16px; height: 16px; margin: 0 auto; }
.scroll { width: 16px; margin: 0 1px; display: flex; flex-direction: column; align-items: center; padding: 6px 0; background: #f0f0f0; }
.scroll svg { width: 8px; height: 6px; }
.scroll i { width: 15px; height: 33px; margin: 5px 0 auto; background: #cdcdcd; }
.dismiss { width: 20px; padding: 2px 0 0 2px; align-self: flex-start; }
.dismiss svg { width: 8px; height: 8px; }

/* 3D view */
.right { display: flex; flex-direction: column; min-width: 0; background: #fff; }
.scene-tools { height: 28px; display: flex; justify-content: flex-end; align-items: center; gap: 8px; padding: 2px 4px 0 0; background: #f0f0f0; }
.scene-tools .sep { width: 1px; height: 23px; margin-right: -3px; background: #c4c4c4; }
.scene { flex: 1 1 0; width: 100%; height: 0; min-height: 400px; stroke: none; }
.model * { vector-effect: non-scaling-stroke; }
.edge { stroke: #2f3035; stroke-opacity: .8; }
.soft { stroke-opacity: .35; }
.axis-names { font: 700 14px/1 "Liberation Sans", sans-serif; }
.callout { position: absolute; left: 0; top: 0; pointer-events: none; }

/* footer */
.footer { height: 40px; display: grid; place-items: center; background: #e8e8e8; border-top: 1px solid #cdcdcd; }
.accept { width: 69px; height: 25px; border: 2px solid #0078d7; background: #e1e1e1; }
```
